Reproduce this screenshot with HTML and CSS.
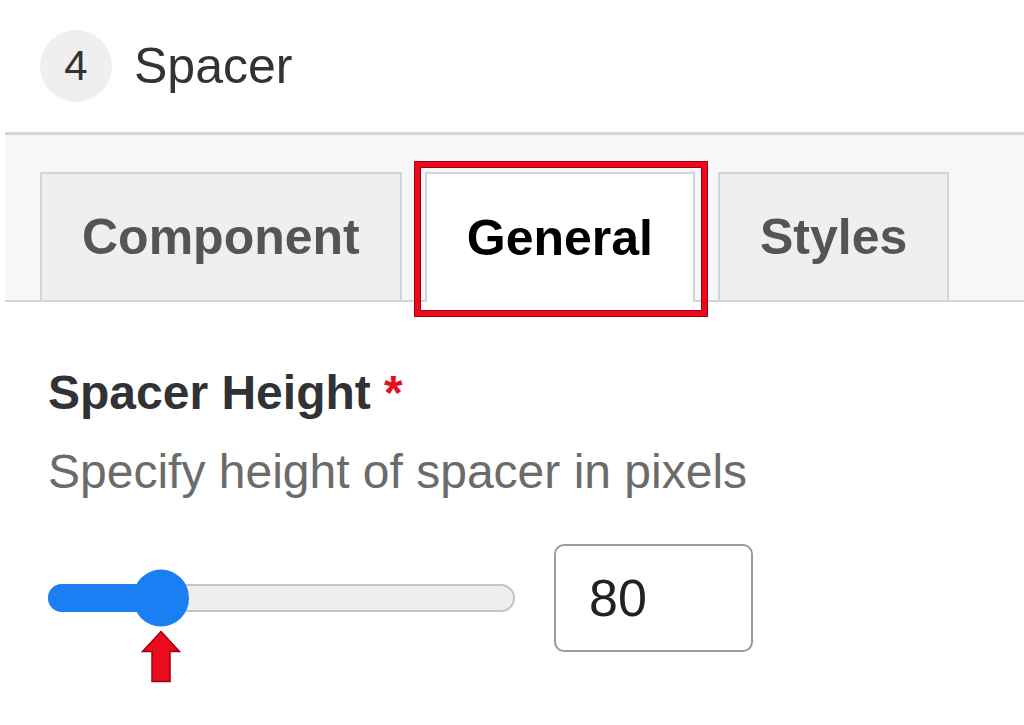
FILE: index.html
```html
<!DOCTYPE html>
<html lang="en">
<head>
    <meta charset="UTF-8">
    <meta name="viewport" content="width=device-width, initial-scale=1.0">
    <title>Spacer settings</title>
    <link rel="stylesheet" href="styles.css">
</head>
<body>
    <header class="step-head">
        <span class="step-num">4</span>
        <h1 class="step-title">Spacer</h1>
    </header>

    <div class="tab-bar">
        <div class="tabs">
            <button type="button" class="tab">Component</button>
            <button type="button" class="tab tab-active">General</button>
            <button type="button" class="tab">Styles</button>
        </div>
    </div>

    <section class="field">
        <label class="field-label" for="spacerHeight">Spacer Height <span class="required">*</span></label>
        <p class="field-help">Specify height of spacer in pixels</p>

        <div class="slider-row">
            <div class="slider">
                <div class="slider-fill" style="width: 24%;"></div>
                <div class="slider-thumb" style="left: 24%;"></div>
                <svg class="slider-arrow" style="left: 24%;" width="40" height="53" viewBox="0 0 40 53">
                    <polygon points="20,1.5 38.5,21.5 29,21.5 29,51.5 11,51.5 11,21.5 1.5,21.5" fill="#ec0a1d" stroke="#9c0012" stroke-width="1.5" stroke-linejoin="miter"/>
                </svg>
            </div>
            <input type="text" id="spacerHeight" class="num-input" value="80">
        </div>
    </section>
</body>
</html>
```

FILE: styles.css
```css
body {
    margin: 0;
    background-color: #fff;
    font-family: "Liberation Sans", Arial, sans-serif;
    color: #333;
}

.step-head {
    display: flex;
    align-items: center;
    gap: 22px;
    padding: 30px 0 30px 40px;
}
.step-num {
    display: flex;
    align-items: center;
    justify-content: center;
    width: 72px;
    height: 72px;
    border-radius: 50%;
    background-color: #efefef;
    font-size: 42px;
    color: #333;
}
.step-title {
    margin: 0;
    font-size: 50px;
    font-weight: normal;
    line-height: 1;
    color: #333;
}

.tab-bar {
    margin-left: 5px;
    padding: 37px 0 0 35px;
    background-color: #f7f7f7;
    border-top: 3px solid #d2d5d9;
    border-bottom: 2px solid #d2d5d9;
}
.tabs {
    display: flex;
    align-items: flex-end;
    gap: 23px;
}
.tab {
    display: flex;
    align-items: center;
    justify-content: center;
    height: 128px;
    box-sizing: border-box;
    padding: 0 40px;
    margin-bottom: 0;
    border: 2px solid #d2d5d9;
    border-bottom: none;
    background-color: #efefef;
    font-family: "Liberation Sans", Arial, sans-serif;
    font-size: 50px;
    font-weight: bold;
    color: #555;
    cursor: pointer;
}
.tab-active {
    position: relative;
    height: 130px;
    margin-bottom: -2px;
    background-color: #fff;
    color: #000;
}
.tab-active::after {
    content: "";
    position: absolute;
    top: -12px;
    left: -12px;
    right: -14px;
    bottom: -14px;
    border: 5px solid #ec0a1d;
    box-shadow: 0 0 0 1px #a00014, inset 0 0 0 1px #a00014;
    pointer-events: none;
}

.field {
    padding: 62px 48px 70px 48px;
}
.field-label {
    display: block;
    font-size: 48px;
    font-weight: bold;
    line-height: 1.2;
    color: #303236;
}
.required {
    color: #e8101e;
}
.field-help {
    margin: 21px 0 0;
    font-size: 48px;
    line-height: 1.2;
    color: #6b6b6b;
}

.slider-row {
    display: flex;
    align-items: center;
    gap: 39px;
    margin-top: 44px;
}
.slider {
    position: relative;
    width: 467px;
    height: 28px;
    box-sizing: border-box;
    border: 2px solid #c4c4c4;
    border-radius: 14px;
    background-color: #eee;
}
.slider-fill {
    position: absolute;
    top: -2px;
    bottom: -2px;
    left: -2px;
    border-radius: 14px 0 0 14px;
    background-color: #1b7ff4;
}
.slider-thumb {
    position: absolute;
    top: 50%;
    width: 56px;
    height: 57px;
    border-radius: 50%;
    background-color: #1b7ff4;
    transform: translate(-50%, -50%);
}
.slider-arrow {
    position: absolute;
    top: 44px;
    display: block;
    overflow: visible;
    transform: translateX(-50%);
}

.num-input {
    width: 199px;
    height: 108px;
    box-sizing: border-box;
    padding: 0 0 0 33px;
    border: 2px solid #9b9b9b;
    border-radius: 10px;
    font-family: "Liberation Sans", Arial, sans-serif;
    font-size: 52px;
    color: #222;
    outline: none;
}
```
